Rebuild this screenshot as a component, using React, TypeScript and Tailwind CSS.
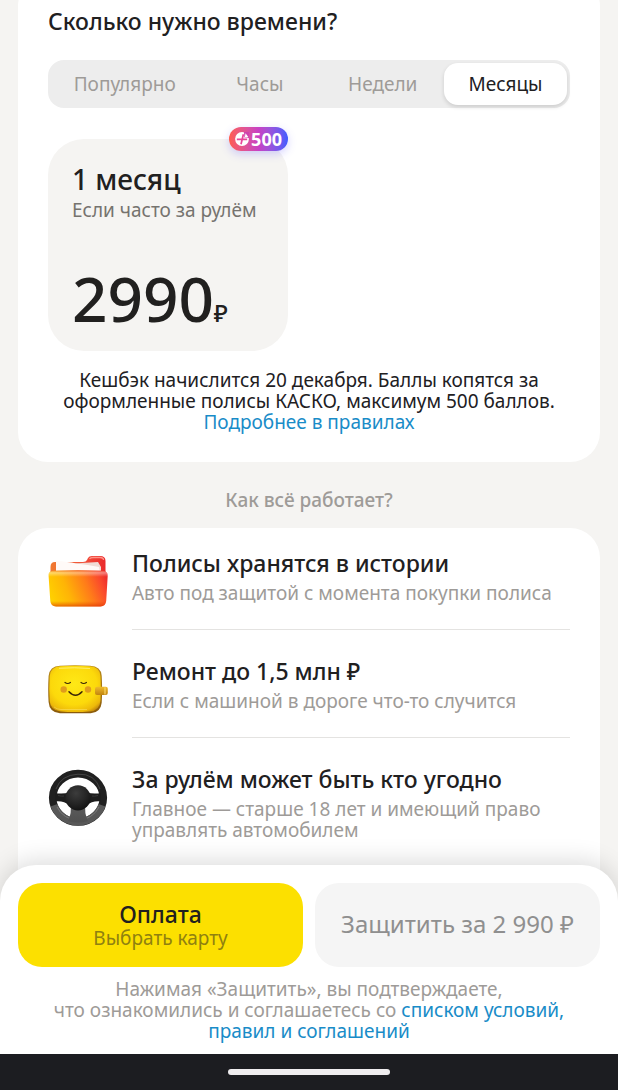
import { useState } from "react";
import type { ComponentType } from "react";

const tabs = ["Популярно", "Часы", "Недели", "Месяцы"];

function PlusIcon() {
  return (
    <svg viewBox="0 0 14 14" className="size-[14px]" aria-hidden="true">
      <circle cx="7" cy="7" r="6.9" fill="#fff" />
      <path d="M8.400 2.200 6 12.200M1.800 7.300h10.400" stroke="#e8459a" strokeWidth="1.700" />
      <path d="M9 0h5v6l-2-.5L9.400 5.400z" fill="#cf42ad" />
      <path d="M10.500 1.300 13.300 5 9.900 5.200z" fill="#fff" />
    </svg>
  );
}

function FolderIcon() {
  return (
    <svg viewBox="0 0 60 60" className="size-[60px] shrink-0" aria-hidden="true">
      <defs>
        <linearGradient id="folderFront" x1="0" y1="0.55" x2="1" y2="0.3">
          <stop offset="0" stopColor="#ffcf00" />
          <stop offset="0.3" stopColor="#ffb406" />
          <stop offset="0.65" stopColor="#ff7a1a" />
          <stop offset="0.88" stopColor="#fa4a2c" />
          <stop offset="1" stopColor="#ee2f2c" />
        </linearGradient>
        <linearGradient id="folderBack" x1="0" y1="0" x2="1" y2="0">
          <stop offset="0" stopColor="#f07a30" />
          <stop offset="0.6" stopColor="#f2503a" />
          <stop offset="1" stopColor="#ea2a2c" />
        </linearGradient>
        <linearGradient id="folderShade" x1="0" y1="0" x2="0" y2="1">
          <stop offset="0" stopColor="#e8471e" stopOpacity="0.5" />
          <stop offset="0.07" stopColor="#fff" stopOpacity="0.4" />
          <stop offset="0.18" stopColor="#fff" stopOpacity="0" />
          <stop offset="0.85" stopColor="#e03c00" stopOpacity="0" />
          <stop offset="1" stopColor="#d82400" stopOpacity="0.6" />
        </linearGradient>
      </defs>
      <path
        d="M2.500 17q0-5 4.500-5h28q3 0 4-2l1-2q1-2 4-2h8q5.500 0 5.500 5v18h-55z"
        fill="url(#folderBack)"
      />
      <path d="M41.500 8.800q1-1.300 3.500-1.300h7q3.500 0 3.500 2.500" stroke="#ff9488" strokeWidth="1.300" fill="none" />
      <path d="M26 13.500 50 12l3 5v8H26z" fill="#f0dcd6" />
      <path d="M8 11q12 .5 20 2.500 12 1 23 3.500l1.500 8H8z" fill="#fffaf8" />
      <path
        d="M.6 26Q0 21 5.500 20.800q24-1 49 0 5.500.2 5.200 5.200l-1.500 25q-.5 5-5.700 5.500H8Q2.800 56 2.300 51z"
        fill="url(#folderFront)"
      />
      <path
        d="M.6 26Q0 21 5.500 20.800q24-1 49 0 5.500.2 5.200 5.200l-1.500 25q-.5 5-5.700 5.500H8Q2.800 56 2.300 51z"
        fill="url(#folderShade)"
      />
    </svg>
  );
}

function WalletIcon() {
  return (
    <svg viewBox="0 0 60 60" className="size-[60px] shrink-0" aria-hidden="true">
      <defs>
        <radialGradient id="walletFace" cx="0.48" cy="0.4" r="0.68">
          <stop offset="0" stopColor="#ffe916" />
          <stop offset="0.65" stopColor="#fcd90b" />
          <stop offset="0.9" stopColor="#edb90a" />
          <stop offset="1" stopColor="#c78c0c" />
        </radialGradient>
        <linearGradient id="walletEdge" x1="0" y1="0" x2="0" y2="1">
          <stop offset="0" stopColor="#b98a1c" />
          <stop offset="1" stopColor="#8a5a0a" />
        </linearGradient>
        <linearGradient id="walletClasp" x1="0" y1="0" x2="0" y2="1">
          <stop offset="0" stopColor="#f0bb2c" />
          <stop offset="1" stopColor="#c0840f" />
        </linearGradient>
      </defs>
      <path
        d="M12 7.700q15-.8 30 0 11 .5 11.700 10 .8 14 0 27-1 9.800-11 10.600H12Q1.300 54.500.6 44q-.8-12 0-26Q1.500 8.200 12 7.700z"
        fill="url(#walletEdge)"
      />
      <path
        d="M12.500 8.200q14.500-.8 29 0 10.500.5 11 10 .8 13 0 24.500-.8 9.800-10.500 10.800-15 1-29.500 0Q2.500 52.500 1.700 43q-.8-12 0-25 .8-9.300 10.800-9.800z"
        fill="url(#walletFace)"
      />
      <path d="M11 10.300q15.500-1.200 31 .2" stroke="#fff59a" strokeWidth="1" fill="none" opacity="0.7" />
      <path d="M6 49q3 2.500 7 2.500h26" stroke="#fff08a" strokeWidth="0.800" fill="none" opacity="0.5" />
      <rect x="47" y="28.700" width="12.800" height="8.300" rx="2" fill="url(#walletClasp)" />
      <path d="M57 29.200v7.300" stroke="#fbd768" strokeWidth="1.200" />
      <circle cx="15.700" cy="31.500" r="3.200" fill="#e09c1c" />
      <circle cx="40" cy="31.500" r="3.200" fill="#e09c1c" />
      <g fill="none" stroke="#3b2607" strokeLinecap="round">
        <path d="M17 24.500q2.700 2 5.400 0M33 24.500q2.700 2 5.400 0" strokeWidth="1.200" />
        <path d="M21 33.800q6.500 7 13 0" strokeWidth="1.500" />
      </g>
    </svg>
  );
}

function WheelIcon() {
  return (
    <svg viewBox="0 0 60 60" className="size-[60px] shrink-0" aria-hidden="true">
      <defs>
        <radialGradient id="wheelHub" cx="0.42" cy="0.32" r="0.7">
          <stop offset="0" stopColor="#3c3c3c" />
          <stop offset="0.6" stopColor="#252525" />
          <stop offset="1" stopColor="#131313" />
        </radialGradient>
        <linearGradient id="wheelLower" x1="0" y1="0" x2="0" y2="1">
          <stop offset="0" stopColor="#5c5c5c" />
          <stop offset="1" stopColor="#505050" />
        </linearGradient>
      </defs>
      <ellipse cx="30" cy="31.800" rx="25.300" ry="24.200" fill="none" stroke="#202020" strokeWidth="7.600" />
      <path d="M6 39.300A25.300 24.200 0 0 0 54 39.300" fill="none" stroke="#585858" strokeWidth="7.400" />
      <path d="M9 41A23 22 0 0 0 51 41" fill="none" stroke="#787878" strokeWidth="1" />
      <path d="M8 23Q13 9 30 8.200T52 23" fill="none" stroke="#444" strokeWidth="1" />
      <path d="M7 27q9 1.500 14-1h18q5 2.500 14 1v8.500q-9-1-14 4H21q-5-5-14-4z" fill="#1d1d1d" />
      <path d="M22.500 38h15q-1.500 9 2.500 17-10 3-20 0 4-8 2.500-17z" fill="url(#wheelLower)" />
      <circle cx="30" cy="31.800" r="12.600" fill="url(#wheelHub)" />
      <path d="M10 29.500q4 1 6 .5M50 29.500q-4 1-6 .5" stroke="#383838" strokeWidth="1" fill="none" />
    </svg>
  );
}

type Feature = { icon: ComponentType; title: string; text: string };

const features: Feature[] = [
  {
    icon: FolderIcon,
    title: "Полисы хранятся в истории",
    text: "Авто под защитой с момента покупки полиса",
  },
  {
    icon: WalletIcon,
    title: "Ремонт до 1,5 млн ₽",
    text: "Если с машиной в дороге что-то случится",
  },
  {
    icon: WheelIcon,
    title: "За рулём может быть кто угодно",
    text: "Главное — старше 18 лет и имеющий право управлять автомобилем",
  },
];

function Tabs() {
  const [active, setActive] = useState("Месяцы");

  return (
    <div
      role="tablist"
      aria-label="Срок полиса"
      className="mt-[26px] grid h-12 grid-cols-[6fr_5fr_5fr_5fr] rounded-2xl bg-[#ededed] p-[3px]"
    >
      {tabs.map((tab) => (
        <button
          key={tab}
          type="button"
          role="tab"
          aria-selected={tab === active}
          onClick={() => setActive(tab)}
          className={`rounded-[14px] text-[19px] ${
            tab === active
              ? "bg-white text-[#21201f] shadow-[0_2px_4px_rgba(0,0,0,0.14)]"
              : "text-[#9e9b98]"
          }`}
        >
          {tab}
        </button>
      ))}
    </div>
  );
}

function PlanCard() {
  return (
    <button
      type="button"
      className="relative mt-[31px] block w-60 rounded-[36px] bg-[#f5f4f2] px-6 pt-[21px] pb-[21px] text-left"
    >
      <span className="absolute -top-3 right-0 flex h-6 items-center gap-0.5 rounded-full bg-linear-to-r from-[#ff5c4d] via-[#c83fc4] to-[#3f5bff] px-1.5 text-lg font-bold text-white shadow-[0_3px_8px_rgba(90,80,255,0.25)]">
        <PlusIcon />
        500
      </span>
      <span className="block text-[28px] leading-[38px] font-medium">1 месяц</span>
      <span className="block text-[19px] leading-6 whitespace-nowrap text-[#75736f]">
        Если часто за рулём
      </span>
      <span className="mt-11 block text-[62px] leading-16 font-medium">
        2990<span className="text-2xl">₽</span>
      </span>
    </button>
  );
}

function FeatureRow({ icon: Icon, title, text }: Feature) {
  return (
    <li className="group flex gap-6 pt-7 first:pt-[22px]">
      <Icon />
      <div className="flex-1 border-b border-[#e4e3e1] pb-[25px] group-last:border-b-0">
        <h3 className="text-[23px] leading-[26px] font-medium">{title}</h3>
        <p className="mt-[7px] text-[19px] leading-[21px] text-[#9e9b98]">{text}</p>
      </div>
    </li>
  );
}

export default function App() {
  return (
    <div className="flex min-h-screen flex-col bg-[#f5f4f2] font-['Noto_Sans','Liberation_Sans',sans-serif] text-[#21201f]">
      <main className="-mt-6 flex flex-1 flex-col px-[18px]">
        <section className="rounded-[30px] bg-white px-[30px] pt-8 pb-[29px]">
          <h2 className="text-[23px] leading-[26px] font-medium">Сколько нужно времени?</h2>
          <Tabs />
          <PlanCard />
          <p className="mt-[19px] text-center text-[19px] leading-[21px]">
            Кешбэк начислится 20 декабря. Баллы копятся за оформленные полисы КАСКО, максимум 500
            баллов.
            <br />
            <a href="#rules" className="text-[#198cc8]">
              Подробнее в правилах
            </a>
          </p>
        </section>

        <h2 className="mt-7 mb-[18px] text-center text-[19px] leading-5 font-medium text-[#9e9b98]">
          Как всё работает?
        </h2>

        <section className="flex-1 rounded-t-[30px] bg-white px-[30px] pb-8">
          <ul>
            {features.map((feature) => (
              <FeatureRow key={feature.title} {...feature} />
            ))}
          </ul>
        </section>
      </main>

      <footer className="sticky bottom-0 -mt-9 rounded-t-[36px] bg-white shadow-[0_-4px_24px_rgba(0,0,0,0.14)]">
        <div className="grid grid-cols-2 gap-3 px-[18px] pt-[18px]">
          <button
            type="button"
            className="h-[84px] rounded-3xl bg-[#fce000] px-4 pb-0.5 text-[23px] leading-7 font-medium"
          >
            Оплата
            <span className="block text-[19px] leading-[21px] font-normal text-[#8f8110]">
              Выбрать карту
            </span>
          </button>
          <button
            type="button"
            className="h-[84px] rounded-3xl bg-[#f5f5f5] px-4 pb-0.5 text-2xl text-[#8f8f8f]"
          >
            Защитить за 2 990 ₽
          </button>
        </div>
        <p className="px-6 py-3 text-center text-[19px] leading-[21px] text-[#9e9b98]">
          Нажимая «Защитить», вы подтверждаете,
          <br />
          что ознакомились и соглашаетесь со{" "}
          <a href="#terms" className="text-[#198cc8]">
            списком условий,
            <br />
            правил и соглашений
          </a>
        </p>
        <div className="flex h-9 items-center justify-center bg-[#1c1d21]">
          <div className="h-[6px] w-[162px] rounded-full bg-[#efedef]" />
        </div>
      </footer>
    </div>
  );
}
